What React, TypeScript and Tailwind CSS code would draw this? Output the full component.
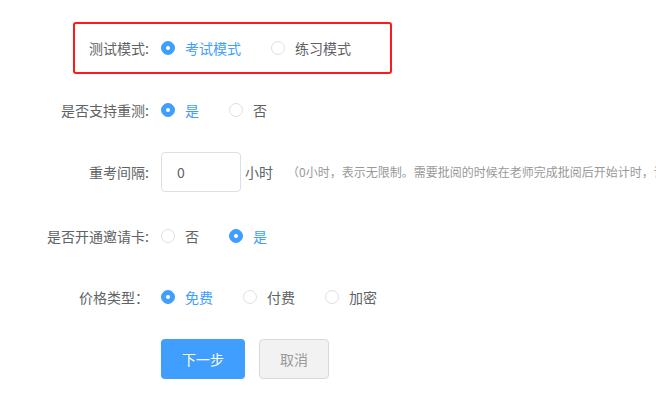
import React from "react";

const font = { fontFamily: '"Noto Sans CJK SC", "Microsoft YaHei", sans-serif' };

function Radio({ checked, label, last }: { checked?: boolean; label: string; last?: boolean }) {
  return (
    <div className={`flex items-center ${last ? "" : "mr-[30px]"}`}>
      {checked ? (
        <span className="w-[14px] h-[14px] rounded-full bg-[#409eff] border border-[#409eff] flex items-center justify-center">
          <span className="w-[4px] h-[4px] rounded-full bg-white" />
        </span>
      ) : (
        <span className="w-[14px] h-[14px] rounded-full bg-white border border-[#dcdfe6]" />
      )}
      <span className={`ml-[10px] text-[14px] leading-none ${checked ? "text-[#409eff]" : "text-[#606266]"}`}>{label}</span>
    </div>
  );
}

function Label({ text, w = "w-[161px]" }: { text: string; w?: string }) {
  return (
    <div className={`${w} shrink-0 pr-[12px] text-right text-[14px] text-[#606266] leading-none whitespace-nowrap`}>{text}</div>
  );
}

export default function App() {
  return (
    <div className="w-[656px] h-[398px] bg-white overflow-hidden" style={font}>
      <div className="pt-[22px]">
        <div className="ml-[73px] w-[319px] border-2 border-[#ff1a1a] rounded-[3px] py-[4px]">
          <div className="h-[40px] flex items-center">
            <Label text="测试模式:" w="w-[86px]" />
            <Radio checked label="考试模式" />
            <Radio label="练习模式" last />
          </div>
        </div>

        <div className="mt-[16px] h-[40px] flex items-center">
          <Label text="是否支持重测:" />
          <Radio checked label="是" />
          <Radio label="否" last />
        </div>

        <div className="mt-[22px] h-[40px] flex items-center whitespace-nowrap">
          <Label text="重考间隔:" />
          <div className="w-[80px] h-[40px] shrink-0 border border-[#dcdfe6] rounded-[4px] flex items-center pl-[15px] text-[14px] text-[#606266]">
            0
          </div>
          <span className="ml-[4px] text-[14px] text-[#606266] shrink-0">小时</span>
          <span className="ml-[14px] text-[12px] text-[#999999] shrink-0">（0小时，表示无限制。需要批阅的时候在老师完成批阅后开始计时，请输入整数）</span>
        </div>

        <div className="mt-[24px] h-[40px] flex items-center">
          <Label text="是否开通邀请卡:" />
          <Radio label="否" />
          <Radio checked label="是" last />
        </div>

        <div className="mt-[21px] h-[40px] flex items-center">
          <Label text="价格类型：" />
          <Radio checked label="免费" />
          <Radio label="付费" />
          <Radio label="加密" last />
        </div>

        <div className="mt-[22px] flex items-center pl-[161px]">
          <button className="w-[84px] h-[40px] rounded-[4px] bg-[#409eff] text-white text-[14px]">下一步</button>
          <button className="ml-[14px] w-[70px] h-[40px] rounded-[4px] bg-[#f2f2f2] border border-[#d9d9d9] text-[#999999] text-[14px]">取消</button>
        </div>
      </div>
    </div>
  );
}
